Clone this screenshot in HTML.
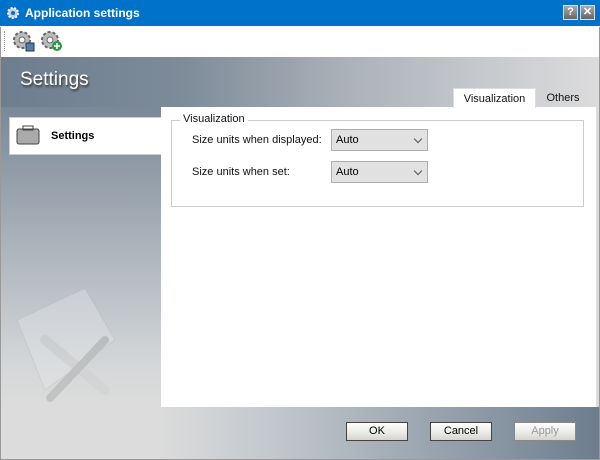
<!DOCTYPE html>
<html><head><style>
*{margin:0;padding:0;box-sizing:border-box}
body{width:600px;height:460px;position:relative;overflow:hidden;font-family:"Liberation Sans",Tahoma,sans-serif;font-size:11px;background:#fff}
.a{position:absolute}
.title{left:0;top:0;width:600px;height:26px;background:#0072c9;color:#fff;font-weight:bold;font-size:12px;line-height:26px;padding-left:25px}
.tb{top:27px;left:0;width:600px;height:30px;background:#fff;border-left:1px solid #999;border-right:1px solid #999}
.main{left:0;top:57px;width:600px;height:403px;border:1px solid #999;border-top:none;background:linear-gradient(90deg,#6e7e8f 0%,#7d8b99 30%,#aeb4bb 60%,#dcdcdd 100%)}
.left{left:1px;top:107px;width:160px;height:300px;background:linear-gradient(180deg,#7a8897 0%,#aab2ba 45%,#d3d6d8 85%,#dcdcdc 100%)}
.bottom{left:1px;top:407px;width:598px;height:52px;background:linear-gradient(90deg,#dcdcdc 0%,#dcdcdc 26%,#c3c8cd 45%,#95a0ac 75%,#6d7d8e 100%)}
.btn{top:422px;width:62px;height:19px;border:1px solid #444;background:linear-gradient(#fff,#e8e8e4 60%,#d4d4cf);text-align:center;line-height:17px;font-size:11px}
.combo{left:331px;width:97px;height:22px;border:1px solid #adadad;background:#e1e1e1;padding-left:4px;line-height:21px}
.combo:after{content:"";position:absolute;right:6px;top:6px;width:5px;height:5px;border-right:1px solid #555;border-bottom:1px solid #555;transform:rotate(45deg)}
</style></head><body>
<div class="a title">Application settings</div>
<svg class="a" style="left:6px;top:6px" width="14" height="14" viewBox="0 0 14 14"><circle cx="7" cy="7" r="5" fill="#ccd" stroke="#fff" stroke-width="2" stroke-dasharray="2 1.5"/><circle cx="7" cy="7" r="2" fill="#0072c9"/></svg>
<div class="a" style="left:563px;top:5px;width:15px;height:15px;background:linear-gradient(#aaa,#666);border:1px solid #ddd;color:#fff;font-weight:bold;font-size:11px;text-align:center;line-height:13px">?</div>
<div class="a" style="left:580px;top:5px;width:15px;height:15px;background:linear-gradient(#aaa,#666);border:1px solid #ddd;color:#fff;font-weight:bold;font-size:11px;text-align:center;line-height:13px">✕</div>
<div class="a tb"></div>
<div class="a" style="left:4px;top:31px;width:1px;height:20px;border-left:1px dotted #999"></div>
<svg class="a" style="left:12px;top:30px" width="24" height="22"><circle cx="10" cy="10" r="8" fill="#bbb" stroke="#666" stroke-width="2" stroke-dasharray="3 2"/><circle cx="10" cy="10" r="3" fill="#fff" stroke="#666"/><rect x="14" y="13" width="8" height="8" fill="#4a7fb0" stroke="#333"/></svg>
<svg class="a" style="left:40px;top:30px" width="24" height="22"><circle cx="10" cy="10" r="8" fill="#bbb" stroke="#666" stroke-width="2" stroke-dasharray="3 2"/><circle cx="10" cy="10" r="3" fill="#fff" stroke="#666"/><circle cx="17" cy="16" r="5" fill="#2a9a3a"/><path d="M14 16h6M17 13v6" stroke="#fff" stroke-width="1.6"/></svg>
<div class="a main"></div>
<div class="a left"></div>
<div class="a" style="left:20px;top:69px;color:#fff;font-size:19px;text-shadow:1px 2px 2px #333">Settings</div>
<div class="a" style="left:9px;top:117px;width:152px;height:38px;background:#fff;border:1px solid #ccc;border-right:none"></div>
<svg class="a" style="left:16px;top:124px" width="26" height="22"><rect x="1" y="5" width="22" height="15" rx="2" fill="#aaa" stroke="#444"/><rect x="7" y="2" width="10" height="4" fill="none" stroke="#444"/></svg>
<div class="a" style="left:51px;top:130px;font-weight:bold;font-size:11px">Settings</div>
<svg class="a" style="left:5px;top:280px" width="120" height="130" opacity="0.35"><path d="M12 40 L80 8 L110 60 L40 110 Z" fill="#e8eaec" stroke="#bbb"/><path d="M40 60 L100 110" stroke="#ccc" stroke-width="10" stroke-linecap="round"/><path d="M100 60 L45 118" stroke="#999" stroke-width="8" stroke-linecap="round"/></svg>
<div class="a" style="left:161px;top:107px;width:435px;height:300px;background:#fff"></div>
<div class="a" style="left:453px;top:88px;width:83px;height:20px;background:#fff;border:1px solid #ddd;border-bottom:none;text-align:center;line-height:20px;color:#111">Visualization</div>
<div class="a" style="left:540px;top:88px;width:46px;height:20px;text-align:center;line-height:20px;color:#111">Others</div>
<div class="a" style="left:171px;top:120px;width:413px;height:87px;border:1px solid #ccc"></div>
<div class="a" style="left:180px;top:113px;background:#fff;padding:0 3px;color:#111">Visualization</div>
<div class="a" style="left:192px;top:134px;color:#111">Size units when displayed:</div>
<div class="a" style="left:192px;top:166px;color:#111">Size units when set:</div>
<div class="a combo" style="top:129px">Auto</div>
<div class="a combo" style="top:161px">Auto</div>
<div class="a bottom"></div>
<div class="a btn" style="left:346px">OK</div>
<div class="a btn" style="left:430px">Cancel</div>
<div class="a btn" style="left:514px;color:#999;border-color:#888">Apply</div>
</body></html>
